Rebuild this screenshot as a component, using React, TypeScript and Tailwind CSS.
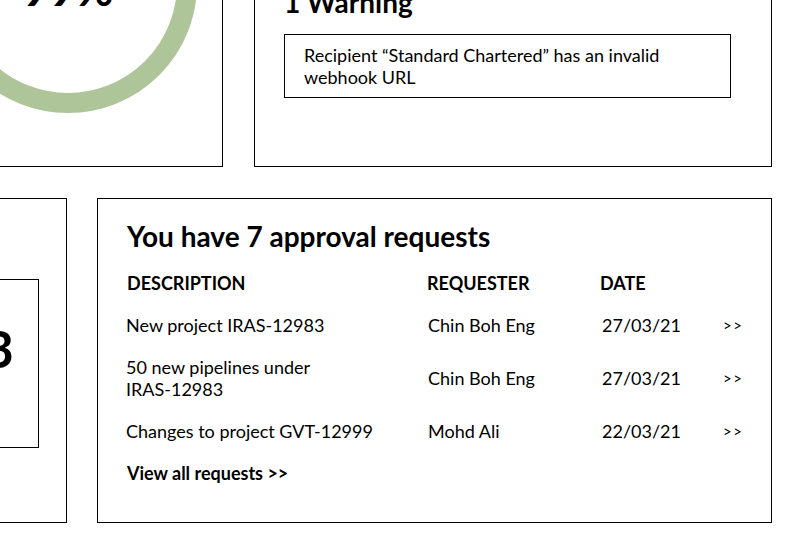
import React from "react";

const rows: { d: React.ReactNode; r: string; t: string; k: string }[] = [
  { k: "a", d: "New project IRAS-12983", r: "Chin Boh Eng", t: "27/03/21" },
  {
    k: "b",
    d: (
      <>
        50 new pipelines under <span className="whitespace-nowrap">IRAS-12983</span>
      </>
    ),
    r: "Chin Boh Eng",
    t: "27/03/21",
  },
  { k: "c", d: <span className="whitespace-nowrap">Changes to project GVT-12999</span>, r: "Mohd Ali", t: "22/03/21" },
];

export default function App() {
  return (
    <div className="w-[798px] h-[550px] overflow-hidden bg-white text-black font-['Lato',sans-serif]">
      <div className="ml-[-87px] mt-[-200px] flex flex-col gap-[31px]">
        {/* Row 1 */}
        <div className="flex gap-[31px] h-[367px]">
          <div className="w-[310px] shrink-0 border border-black flex flex-col items-center justify-end pb-[53px]">
            <div className="relative w-[258px] h-[258px]">
              <svg width="258" height="258" viewBox="0 0 258 258">
                <circle cx="129" cy="129" r="119" fill="none" stroke="#adc599" strokeWidth="20" />
              </svg>
              <div className="absolute inset-0 flex items-center justify-center pt-[10px]">
                <span className="text-[46px] leading-none font-bold">99%</span>
              </div>
            </div>
          </div>
          <div className="w-[518px] shrink-0 border border-black flex flex-col justify-end pl-[29px] pb-[68px]">
            <h2 className="text-[28px] leading-[32px] font-bold mb-[16px]">1 Warning</h2>
            <div className="w-[447px] h-[64px] border border-black pl-[19px] pr-[20px] py-[9px] text-[18px] leading-[22px]">
              Recipient “Standard Chartered” has an invalid webhook URL
            </div>
          </div>
        </div>

        {/* Row 2 */}
        <div className="flex gap-[30px] h-[325px]">
          <div className="w-[154px] shrink-0 border border-black pl-[28px] pr-[27px] pt-[80px]">
            <div className="h-[169px] border border-black flex justify-end pr-[24px] pt-[42px]">
              <span className="text-[52px] leading-[52px] font-bold">3</span>
            </div>
          </div>
          <div className="w-[675px] shrink-0 border border-black pl-[29px] pt-[21px]">
            <h2 className="text-[28px] leading-[32px] font-bold">You have 7 approval requests</h2>
            <div className="mt-5 grid grid-cols-[300px_173px_123px_auto] items-center gap-y-5 text-[18px] leading-[22px]">
              <div className="font-bold">DESCRIPTION</div>
              <div className="font-bold">REQUESTER</div>
              <div className="font-bold">DATE</div>
              <div />
              {rows.map((row) => (
                <React.Fragment key={row.k}>
                  <div className="w-[262px] ml-[-1px]">{row.d}</div>
                  <div className="pl-[1px]">{row.r}</div>
                  <div className="pl-[2px]">{row.t}</div>
                  <div className="text-[15px] tracking-[1.5px]">&gt;&gt;</div>
                </React.Fragment>
              ))}
            </div>
            <div className="mt-5 text-[18px] leading-[22px] font-bold">View all requests &gt;&gt;</div>
          </div>
        </div>
      </div>
    </div>
  );
}
